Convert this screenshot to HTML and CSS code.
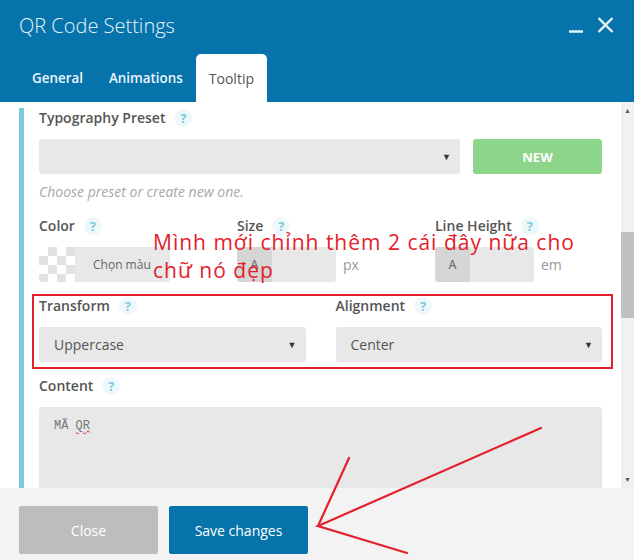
FILE: index.html
```html
<!DOCTYPE html>
<html>
<head>
    <title>QR Code Settings</title>
    <link rel="stylesheet" href="styles.css">
</head>
<body>
    <div class="modal">
        <div class="modal-header">
            <div class="title-row">
                <h1>QR Code Settings</h1>
                <div class="window-buttons">
                    <svg width="16" height="16" viewBox="0 0 16 16"><path d="M1 14.5 H15" stroke="#e6f3fa" stroke-width="2.5"/></svg>
                    <svg width="17" height="16" viewBox="0 0 17 16"><path d="M1.5 1 L15.5 15 M15.5 1 L1.5 15" stroke="#e6f3fa" stroke-width="2.4"/></svg>
                </div>
            </div>
            <div class="tabs">
                <div class="tab">General</div>
                <div class="tab">Animations</div>
                <div class="tab active">Tooltip</div>
            </div>
        </div>

        <div class="modal-body">
            <div class="content">
                <div class="panel">
                    <div class="field">
                        <div class="label">Typography Preset <span class="help">?</span></div>
                        <div class="preset-row">
                            <div class="select wide"><span></span><span class="arrow">&#9660;</span></div>
                            <div class="btn-new">NEW</div>
                        </div>
                        <div class="hint">Choose preset or create new one.</div>
                    </div>

                    <div class="field cols-3">
                        <div>
                            <div class="label">Color <span class="help">?</span></div>
                            <div class="color-picker">
                                <div class="checker"></div>
                                <div class="color-text">Chọn màu</div>
                            </div>
                        </div>
                        <div>
                            <div class="label">Size <span class="help">?</span></div>
                            <div class="unit-input">
                                <div class="addon">A</div>
                                <div class="num"></div>
                                <span class="unit">px</span>
                            </div>
                        </div>
                        <div>
                            <div class="label">Line Height <span class="help">?</span></div>
                            <div class="unit-input">
                                <div class="addon">A</div>
                                <div class="num"></div>
                                <span class="unit">em</span>
                            </div>
                        </div>
                    </div>

                    <div class="field cols-2">
                        <div>
                            <div class="label">Transform <span class="help">?</span></div>
                            <div class="select"><span>Uppercase</span><span class="arrow">&#9660;</span></div>
                        </div>
                        <div>
                            <div class="label">Alignment <span class="help">?</span></div>
                            <div class="select"><span>Center</span><span class="arrow">&#9660;</span></div>
                        </div>
                    </div>

                    <div class="field">
                        <div class="label">Content <span class="help">?</span></div>
                        <div class="textarea">MÃ <span class="typo">QR</span></div>
                    </div>
                </div>
            </div>
            <div class="scrollbar">
                <span class="sb-arrow">&#9650;</span>
                <div class="sb-track"><div class="sb-thumb"></div></div>
                <span class="sb-arrow">&#9660;</span>
            </div>
        </div>

        <div class="modal-footer">
            <div class="btn btn-close">Close</div>
            <div class="btn btn-save">Save changes</div>
        </div>

        <!-- annotations drawn over the screenshot -->
        <div class="note">Mình mới chỉnh thêm 2 cái đây nữa cho<br>chữ nó đẹp</div>
        <div class="note-box"></div>
        <svg class="note-arrow" width="634" height="560" viewBox="0 0 634 560">
            <path d="M541 428 L318 526 L407 553 M349 458 L318 526" fill="none" stroke="#e3202b" stroke-width="2.2" stroke-linecap="round"/>
        </svg>
    </div>
</body>
</html>
```

FILE: styles.css
```css
body {
    margin: 0;
    font-family: "Open Sans", Arial, sans-serif;
    color: #555;
}
.modal {
    position: relative;
    width: 634px;
    height: 560px;
    display: flex;
    flex-direction: column;
    overflow: hidden;
    background: #fff;
}
.modal-header {
    background-color: #0673aa;
    height: 102px;
    display: flex;
    flex-direction: column;
}
.title-row {
    height: 54px;
    display: flex;
    align-items: center;
    justify-content: space-between;
    padding: 0 20px 4px 19px;
    box-sizing: border-box;
}
.title-row h1 {
    margin: 0;
    font-size: 20px;
    font-weight: 300;
    color: #e6f3fa;
}
.window-buttons {
    display: flex;
    gap: 13px;
    align-items: center;
}
.tabs {
    display: flex;
    padding-left: 19px;
    height: 48px;
}
.tab {
    padding: 0 13px;
    display: flex;
    align-items: center;
    font-size: 13.4px;
    font-weight: 600;
    color: #eaf5fb;
}
.tab.active {
    background: #fff;
    color: #555;
    font-weight: 400;
    font-size: 14px;
    border-radius: 5px 5px 0 0;
}
.modal-body {
    flex: 1;
    display: flex;
    overflow: hidden;
}
.content {
    flex: 1;
    padding: 6px 19px 0 19px;
}
.panel {
    border-left: 5px solid #7ccadb;
    padding-left: 15px;
    height: 100%;
}
.field {
    margin-bottom: 14px;
}
.label {
    font-size: 14px;
    font-weight: 600;
    line-height: 20px;
    margin-bottom: 11px;
    color: #555;
    display: flex;
    align-items: center;
}
.help {
    display: inline-block;
    width: 18px;
    height: 18px;
    line-height: 18px;
    border-radius: 50%;
    background: #eef8fb;
    color: #7ccadb;
    text-align: center;
    font-size: 13px;
    font-weight: 700;
    margin-left: 9px;
}
.preset-row {
    display: flex;
    gap: 13px;
}
.select {
    height: 35px;
    background: #e8e8e8;
    border-radius: 3px;
    display: flex;
    align-items: center;
    justify-content: space-between;
    padding: 0 9px 0 15px;
    font-size: 14px;
    color: #555;
}
.select.wide {
    flex: 1;
}
.arrow {
    font-size: 9px;
    color: #333;
}
.btn-new {
    width: 129px;
    height: 35px;
    border-radius: 3px;
    background: #8dd58a;
    color: #fff;
    font-size: 13px;
    font-weight: 700;
    display: flex;
    align-items: center;
    justify-content: center;
}
.hint {
    margin-top: 8px;
    font-size: 14px;
    font-style: italic;
    color: #a8a8a8;
    line-height: 20px;
}
.cols-3 {
    display: grid;
    grid-template-columns: 198px 198px 1fr;
}
.cols-2 {
    display: grid;
    grid-template-columns: 1fr 1fr;
    gap: 30px;
    margin-bottom: 14px;
}
.color-picker {
    display: flex;
    width: 131px;
    height: 35px;
    border-radius: 3px;
    overflow: hidden;
    background: #e8e8e8;
}
.checker {
    width: 36px;
    height: 35px;
    background-color: #fff;
    background-image:
        linear-gradient(45deg, #e2e2e2 25%, transparent 25%, transparent 75%, #e2e2e2 75%),
        linear-gradient(45deg, #e2e2e2 25%, transparent 25%, transparent 75%, #e2e2e2 75%);
    background-size: 18px 18px;
    background-position: 0 0, 9px 9px;
}
.color-text {
    flex: 1;
    display: flex;
    align-items: center;
    padding-left: 18px;
    font-size: 12px;
    color: #666;
}
.unit-input {
    display: flex;
    align-items: center;
}
.addon {
    width: 35px;
    height: 35px;
    background: #d6d6d6;
    border-radius: 3px 0 0 3px;
    display: flex;
    align-items: center;
    justify-content: center;
    font-size: 12px;
    font-weight: 600;
    color: #777;
}
.num {
    width: 64px;
    height: 35px;
    background: #e8e8e8;
    border-radius: 0 3px 3px 0;
}
.unit {
    margin-left: 7px;
    font-size: 14px;
    color: #999;
}
.textarea {
    height: 120px;
    background: #e8e8e8;
    border-radius: 3px;
    padding: 12px 15px;
    font-family: "Liberation Mono", monospace;
    font-size: 12px;
    color: #777;
}
.typo {
    text-decoration: underline wavy #e03030;
    text-decoration-thickness: 1px;
}
.scrollbar {
    width: 13px;
    background: #f1f1f1;
    display: flex;
    flex-direction: column;
    align-items: center;
}
.sb-arrow {
    font-size: 7px;
    color: #555;
    height: 17px;
    line-height: 17px;
}
.sb-track {
    flex: 1;
    width: 100%;
    padding-top: 113px;
}
.sb-thumb {
    height: 86px;
    background: #c1c1c1;
}
.modal-footer {
    height: 72px;
    background: #f3f3f3;
    display: flex;
    gap: 11px;
    padding: 18px 19px 6px;
    box-sizing: border-box;
}
.btn {
    width: 139px;
    height: 48px;
    border-radius: 2px;
    color: #fff;
    font-size: 14px;
    display: flex;
    align-items: center;
    justify-content: center;
}
.btn-close {
    background: #bdbdbd;
}
.btn-save {
    background: #0673aa;
}
.note {
    position: absolute;
    left: 153px;
    top: 228px;
    font-size: 21px;
    line-height: 28px;
    letter-spacing: 1px;
    color: #e3202b;
    font-family: "Open Sans", sans-serif;
}
.note-box {
    position: absolute;
    left: 32px;
    top: 294px;
    width: 577px;
    height: 71px;
    border: 2px solid #e3202b;
}
.note-arrow {
    position: absolute;
    left: 0;
    top: 0;
    pointer-events: none;
}
```
